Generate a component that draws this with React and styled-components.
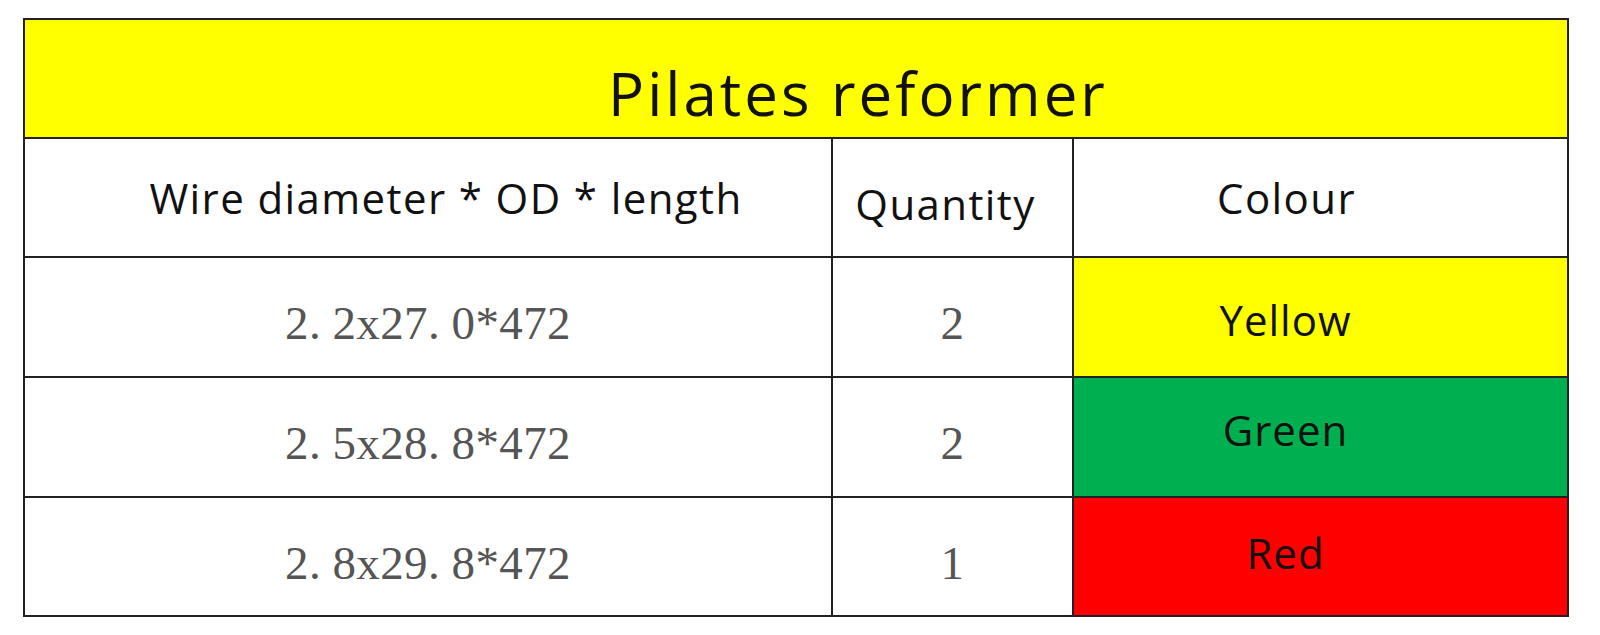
import styled, { createGlobalStyle } from 'styled-components'

const GlobalStyle = createGlobalStyle`
  body {
    margin: 0;
    background: #fff;
  }
`

const springs = [
  { size: '2.2x27.0*472', qty: 2, colour: 'Yellow', bg: '#ffff00', nudge: -4 },
  { size: '2.5x28.8*472', qty: 2, colour: 'Green', bg: '#00b050', nudge: 16 },
  { size: '2.8x29.8*472', qty: 1, colour: 'Red', bg: '#ff0000', nudge: 8 },
]

// the dots sit in a half-width cell, like the CJK serif font of the original
const Figures = ({ text }) =>
  String(text)
    .split('.')
    .flatMap((part, i) => (i ? [<Dot key={i}>.</Dot>, part] : [part]))

const App = () => {
  return (
    <Page>
      <GlobalStyle />
      <Table>
        <Title>Pilates reformer</Title>
        <HeadCell>Wire diameter * OD * length</HeadCell>
        <HeadCell $lift>Quantity</HeadCell>
        <HeadCell $shift>Colour</HeadCell>
        {springs.map((s) => (
          <Row key={s.size}>
            <NumCell>
              <Figures text={s.size} />
            </NumCell>
            <NumCell>{s.qty}</NumCell>
            <ColourCell $bg={s.bg} $nudge={s.nudge}>
              {s.colour}
            </ColourCell>
          </Row>
        ))}
      </Table>
    </Page>
  )
}

const Page = styled.main`
  padding: 18px 0 0 23px;
`

const Table = styled.section`
  display: grid;
  grid-template-columns: 806px 239px 493px;
  grid-template-rows: 117px 117px 118px 118px 117px;
  gap: 2px;
  width: max-content;
  border: 2px solid #222;
  background: #222;
`

const Row = styled.div`
  display: contents;
`

const Cell = styled.div`
  display: flex;
  align-items: center;
  justify-content: center;
  background: #fff;
  white-space: pre;
`

const Title = styled(Cell)`
  grid-column: 1 / -1;
  background: #ffff00;
  padding: 28px 0 0 124px;
  font-family: 'Open Sans', 'Noto Sans', sans-serif;
  font-size: 60px;
  letter-spacing: 3px;
  color: #111;
`

const HeadCell = styled(Cell)`
  font-family: 'Open Sans', 'Noto Sans', sans-serif;
  font-size: 42px;
  letter-spacing: 1.4px;
  color: #111;
  padding-left: ${(p) => (p.$shift || p.$lift ? '0' : '36px')};
  padding-right: ${(p) => (p.$shift ? '68px' : p.$lift ? '14px' : '0')};
  padding-top: ${(p) => (p.$lift ? '12px' : '0')};
`

const NumCell = styled(Cell)`
  padding-top: 12px;
  font-family: 'Liberation Serif', 'DejaVu Serif', serif;
  font-size: 47px;
  letter-spacing: 0.4px;
  color: #555;
`

const Dot = styled.span`
  display: inline-block;
  width: 0.5em;
`

const ColourCell = styled(Cell)`
  background: ${(p) => p.$bg};
  font-family: 'Open Sans', 'Noto Sans', sans-serif;
  font-size: 42px;
  letter-spacing: 1px;
  color: #111;
  padding-right: 70px;
  padding-bottom: ${(p) => p.$nudge}px;
  padding-top: ${(p) => (p.$nudge < 0 ? -p.$nudge : 0)}px;
`

export default App
